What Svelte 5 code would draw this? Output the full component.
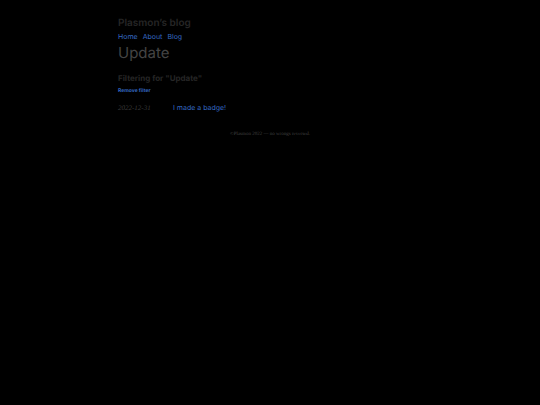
<script lang="ts">
  const pages = [
    { title: 'Home', href: '/' },
    { title: 'About', href: '/about' },
    { title: 'Blog', href: '/blog' },
  ];

  const tag = 'Update';

  const posts = [
    { date: '2022-12-31', title: 'I made a badge!', href: '/blog/badge' },
  ];
</script>

<div class="container">
  <header>
    <p class="site-title">Plasmon’s blog</p>
    <nav>
      {#each pages as page (page.href)}
        <a href={page.href}>{page.title}</a>
      {/each}
    </nav>
  </header>

  <main>
    <h1>{tag}</h1>
    <h2>Filtering for "{tag}"</h2>
    <a class="remove" href="/blog">Remove filter</a>

    <ul class="posts">
      {#each posts as post (post.href)}
        <li>
          <time datetime={post.date}>{post.date}</time>
          <a href={post.href}>{post.title}</a>
        </li>
      {/each}
    </ul>
  </main>

  <footer>©Plasmon 2022 — no wrongs reversed.</footer>
</div>

<style>
  :global(body) {
    background: #000;
  }

  .container {
    max-width: 304px;
    margin: 0 auto;
    padding: 16px;
    color: #262626;
    font-family: Inter, "Liberation Sans", sans-serif;
    font-size: 7px;
    line-height: 14px;
    text-rendering: geometricPrecision;
  }

  a {
    color: #3468c0;
    text-decoration: none;
  }
  a:hover {
    text-decoration: underline;
  }

  .site-title {
    margin: 0;
    font-size: 10px;
    font-weight: 600;
  }

  nav {
    display: flex;
    gap: 5px;
  }

  h1 {
    margin: 0;
    color: #444;
    font-size: 15px;
    font-weight: 400;
    line-height: 18px;
  }

  h2 {
    margin: 9px 0 0;
    font-size: 8px;
    font-weight: 700;
  }

  .remove {
    display: block;
    font-size: 5px;
    font-weight: 700;
    line-height: 12px;
  }

  .posts {
    margin: 4px 0 0;
    padding: 0;
    list-style: none;
  }
  .posts li {
    display: flex;
  }
  .posts time {
    width: 55px;
    color: #3a3a3a;
    font-family: "Liberation Serif", serif;
    font-style: italic;
  }

  footer {
    margin-top: 13px;
    color: #444;
    font-family: "Liberation Serif", serif;
    font-size: 5px;
    text-align: center;
  }
</style>
